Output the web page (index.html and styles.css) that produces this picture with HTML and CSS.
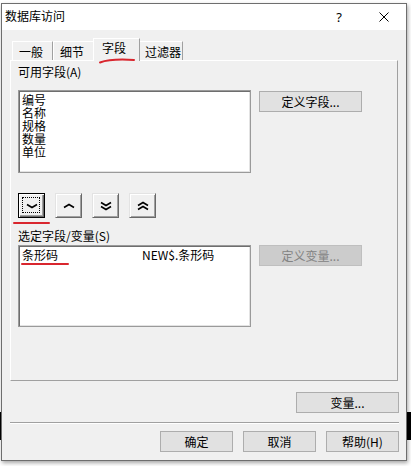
FILE: index.html
```html
<!DOCTYPE html>
<html lang="zh">
<head>
<meta charset="utf-8">
<title>数据库访问</title>
<link rel="stylesheet" href="styles.css">
</head>
<body>
<div class="window">
  <div class="titlebar">
    <span class="title">数据库访问</span>
    <span class="help">?</span>
    <svg class="close" viewBox="0 0 10 10" width="10" height="10"><path d="M0.5 0.5 L9.5 9.5 M9.5 0.5 L0.5 9.5" stroke="#000" stroke-width="1" fill="none"/></svg>
  </div>
  <div class="content">
    <div class="tabs">
      <div class="tab t1">一般</div>
      <div class="tab t2">细节</div>
      <div class="tab t3 active">字段</div>
      <div class="tab t4">过滤器</div>
    </div>
    <div class="panel">
      <div class="label">可用字段(A)</div>
      <div class="row row1">
        <div class="listbox lb1">
          <div class="item">编号</div>
          <div class="item">名称</div>
          <div class="item">规格</div>
          <div class="item">数量</div>
          <div class="item">单位</div>
        </div>
        <button class="btn side">定义字段...</button>
      </div>
      <div class="arrows">
        <div class="arrow default">
          <svg width="12" height="6" viewBox="0 0 12 6"><polyline points="1,1.5 6,4.5 11,1.5" fill="none" stroke="#000" stroke-width="1.6"/></svg>
        </div>
        <div class="arrow">
          <svg width="12" height="6" viewBox="0 0 12 6"><polyline points="1,4.5 6,1.5 11,4.5" fill="none" stroke="#000" stroke-width="1.6"/></svg>
        </div>
        <div class="arrow">
          <svg width="12" height="10" viewBox="0 0 12 10"><polyline points="1,1.5 6,4.5 11,1.5" fill="none" stroke="#000" stroke-width="1.6"/><polyline points="1,5.5 6,8.5 11,5.5" fill="none" stroke="#000" stroke-width="1.6"/></svg>
        </div>
        <div class="arrow">
          <svg width="12" height="10" viewBox="0 0 12 10"><polyline points="1,4.5 6,1.5 11,4.5" fill="none" stroke="#000" stroke-width="1.6"/><polyline points="1,8.5 6,5.5 11,8.5" fill="none" stroke="#000" stroke-width="1.6"/></svg>
        </div>
      </div>
      <div class="label label2">选定字段/变量(S)</div>
      <div class="row row2">
        <div class="listbox lb2">
          <div class="item"><span class="col1">条形码</span><span>NEW$.条形码</span></div>
        </div>
        <button class="btn side disabled">定义变量...</button>
      </div>
    </div>
    <div class="varrow"><button class="btn wide">变量...</button></div>
    <div class="sep"></div>
    <div class="footer">
      <button class="btn foot">确定</button>
      <button class="btn foot">取消</button>
      <button class="btn foot">帮助(H)</button>
    </div>
  </div>
  <svg class="mark mark-tab" width="40" height="8" viewBox="0 0 40 8"><path d="M3 5.5 Q 14 1.5 37 3" fill="none" stroke="#d9262e" stroke-width="2" stroke-linecap="round"/></svg>
  <div class="mark mark-btn"></div>
  <div class="mark mark-item"></div>
</div>
</body>
</html>
```
FILE: styles.css
```css
* { box-sizing: border-box; }

html {
  height: 100%;
  background: linear-gradient(to bottom, #fff 0, #fff 412px, #000 412px, #000 440px, #fff 440px, #fff 100%);
}

body {
  margin: 0;
  width: 411px;
  height: 466px;
  overflow: hidden;
  font-family: "Noto Sans CJK SC", sans-serif;
  font-size: 12px;
  color: #000;
}

.window {
  position: relative;
  margin: 3px 0 0 1px;
  width: 406px;
  height: 458px;
  border: 1px solid #6e6e6e;
  background: #f0f0f0;
  box-shadow: 1px 2px 4px rgba(0, 0, 0, 0.35);
}

.titlebar {
  height: 26px;
  background: #fff;
  display: flex;
  align-items: flex-start;
  padding-top: 5px;
}

.title {
  flex: 1;
  margin-left: 3px;
  line-height: 14px;
}

.help {
  width: 12px;
  margin-right: 34px;
  text-align: center;
  font-family: "Noto Sans", sans-serif;
  font-size: 13px;
  line-height: 16px;
}

.close {
  display: block;
  margin-top: 3px;
  margin-right: 17px;
}

.content {
  padding: 8px 7px 8px 8px;
}

.tabs {
  display: flex;
  align-items: flex-end;
  height: 22px;
  padding-left: 2px;
  position: relative;
  z-index: 1;
}

.tab {
  height: 19px;
  padding: 3px 0 0 6px;
  line-height: 14px;
  border-top: 1px solid #fff;
  border-left: 1px solid #fff;
  border-right: 1px solid #a0a0a0;
  background: #f0f0f0;
}

.t1 { width: 41px; }
.t2 { width: 42px; }
.t4 { width: 45px; }

.tab.active {
  width: 47px;
  height: 23px;
  margin: 0 -2px -1px;
  padding: 2px 0 0 8px;
  position: relative;
  z-index: 2;
}

.panel {
  height: 321px;
  margin-right: 1px;
  border: 1px solid;
  border-color: #fff #a0a0a0 #a0a0a0 #fff;
  padding: 4px 7px 0 7px;
}

.label {
  height: 14px;
  line-height: 14px;
}

.label2 {
  margin-top: 11px;
}

.row {
  display: grid;
  grid-template-columns: 233px 103px;
  column-gap: 8px;
  align-items: start;
}

.row1 { margin-top: 11px; }
.row2 { margin-top: 2px; }

.listbox {
  background: #fff;
  border: 1px solid #9a9a9a;
  box-shadow: inset 1px 1px 0 #6e6e6e, inset -1px -1px 0 #e3e3e3;
  padding: 2px 3px;
}

.lb1 { height: 83px; }
.lb2 { height: 82px; }

.item {
  line-height: 13px;
  white-space: nowrap;
}

.col1 {
  display: inline-block;
  width: 120px;
}

.btn {
  height: 21px;
  padding: 0;
  background: #e1e1e1;
  border: 1px solid #adadad;
  font-family: "Noto Sans CJK SC", sans-serif;
  font-size: 12px;
  color: #000;
  line-height: 17px;
}

.row1 .side { margin-top: 1px; }

.btn.disabled {
  background: #cccccc;
  border-color: #bfbfbf;
  color: #838383;
}

.arrows {
  display: flex;
  gap: 10px;
  margin-top: 20px;
}

.arrow {
  position: relative;
  width: 27px;
  height: 25px;
  display: flex;
  align-items: center;
  justify-content: center;
  background: #f0f0f0;
  border: 1px solid;
  border-color: #e3e3e3 #696969 #696969 #e3e3e3;
  box-shadow: inset 1px 1px 0 #fff, inset -1px -1px 0 #a0a0a0;
}

.arrow.default {
  border-color: #000;
  box-shadow: inset 1px 1px 0 #fff, inset -1px -1px 0 #696969, inset -2px -2px 0 #a0a0a0;
}

.arrow.default::after {
  content: "";
  position: absolute;
  left: 3px;
  top: 3px;
  right: 4px;
  bottom: 4px;
  border: 1px dotted #000;
}

.varrow {
  display: flex;
  justify-content: flex-end;
  margin-top: 11px;
}

.wide { width: 103px; }

.sep {
  margin-top: 9px;
  height: 2px;
  border-top: 1px solid #a0a0a0;
  border-bottom: 1px solid #fff;
}

.footer {
  display: flex;
  justify-content: flex-end;
  gap: 10px;
  margin-top: 7px;
}

.foot { width: 73px; }

.mark {
  position: absolute;
  z-index: 5;
}

.mark-tab {
  left: 95px;
  top: 53px;
}

.mark-btn {
  left: 11px;
  top: 218px;
  width: 37px;
  height: 2px;
  border-radius: 1px;
  background: #d9262e;
}

.mark-item {
  left: 19px;
  top: 259px;
  width: 48px;
  height: 2px;
  border-radius: 1px;
  background: #d9262e;
}
```
